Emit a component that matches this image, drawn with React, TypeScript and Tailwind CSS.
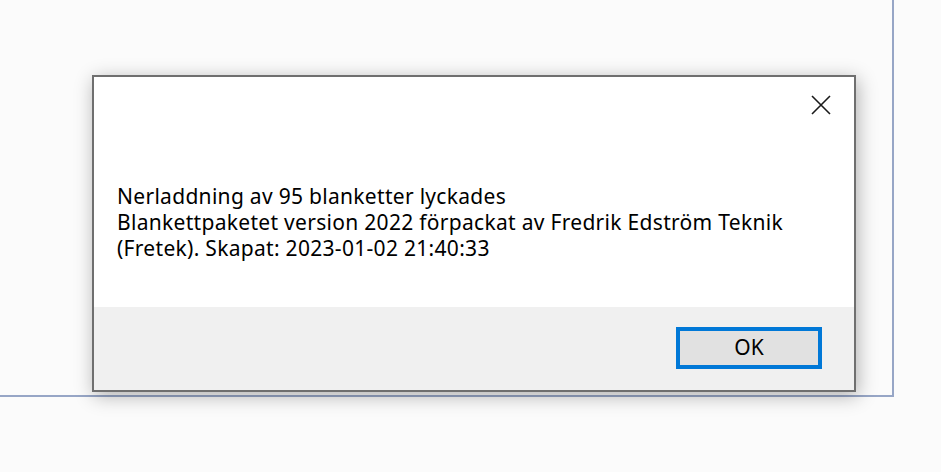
export default function App() {
  return (
    <div
      className="relative h-[472px] w-[941px] overflow-hidden bg-[#fbfbfb]"
      style={{ fontFamily: '"Noto Sans", "Open Sans", sans-serif' }}
    >
      {/* window behind the dialog */}
      <div className="h-[397px] w-[894px] border-b-2 border-r-2 border-[#97a6c6] bg-[#fbfbfb]" />

      {/* message box */}
      <div className="absolute left-[92px] top-[75px] flex h-[317px] w-[764px] flex-col border-2 border-[#6f6f6f] bg-white shadow-[2px_4px_18px_rgba(0,0,0,0.3)]">
        <div className="flex h-[230px] flex-col">
          <div className="flex justify-end pr-[23px] pt-[18px]">
            <svg width="20" height="20" viewBox="0 0 20 20" className="text-[#1a1a1a]">
              <path d="M1 1 L19 19 M19 1 L1 19" stroke="currentColor" strokeWidth="1.6" fill="none" />
            </svg>
          </div>
          <div className="mt-[68px] pl-[23px] pr-[30px] text-[21px] leading-[26px] tracking-[0.3px] text-black">
            <p>Nerladdning av 95 blanketter lyckades</p>
            <p>
              Blankettpaketet version 2022 förpackat av Fredrik Edström Teknik
              <br />
              (Fretek). Skapat: 2023-01-02 21:40:33
            </p>
          </div>
        </div>
        <div className="flex flex-1 items-start justify-end bg-[#f0f0f0] pr-[32px] pt-[20px]">
          <button className="flex h-[42px] w-[146px] items-center justify-center border-4 border-[#0078d7] bg-[#e1e1e1] text-[21px] text-black">
            OK
          </button>
        </div>
      </div>
    </div>
  );
}
